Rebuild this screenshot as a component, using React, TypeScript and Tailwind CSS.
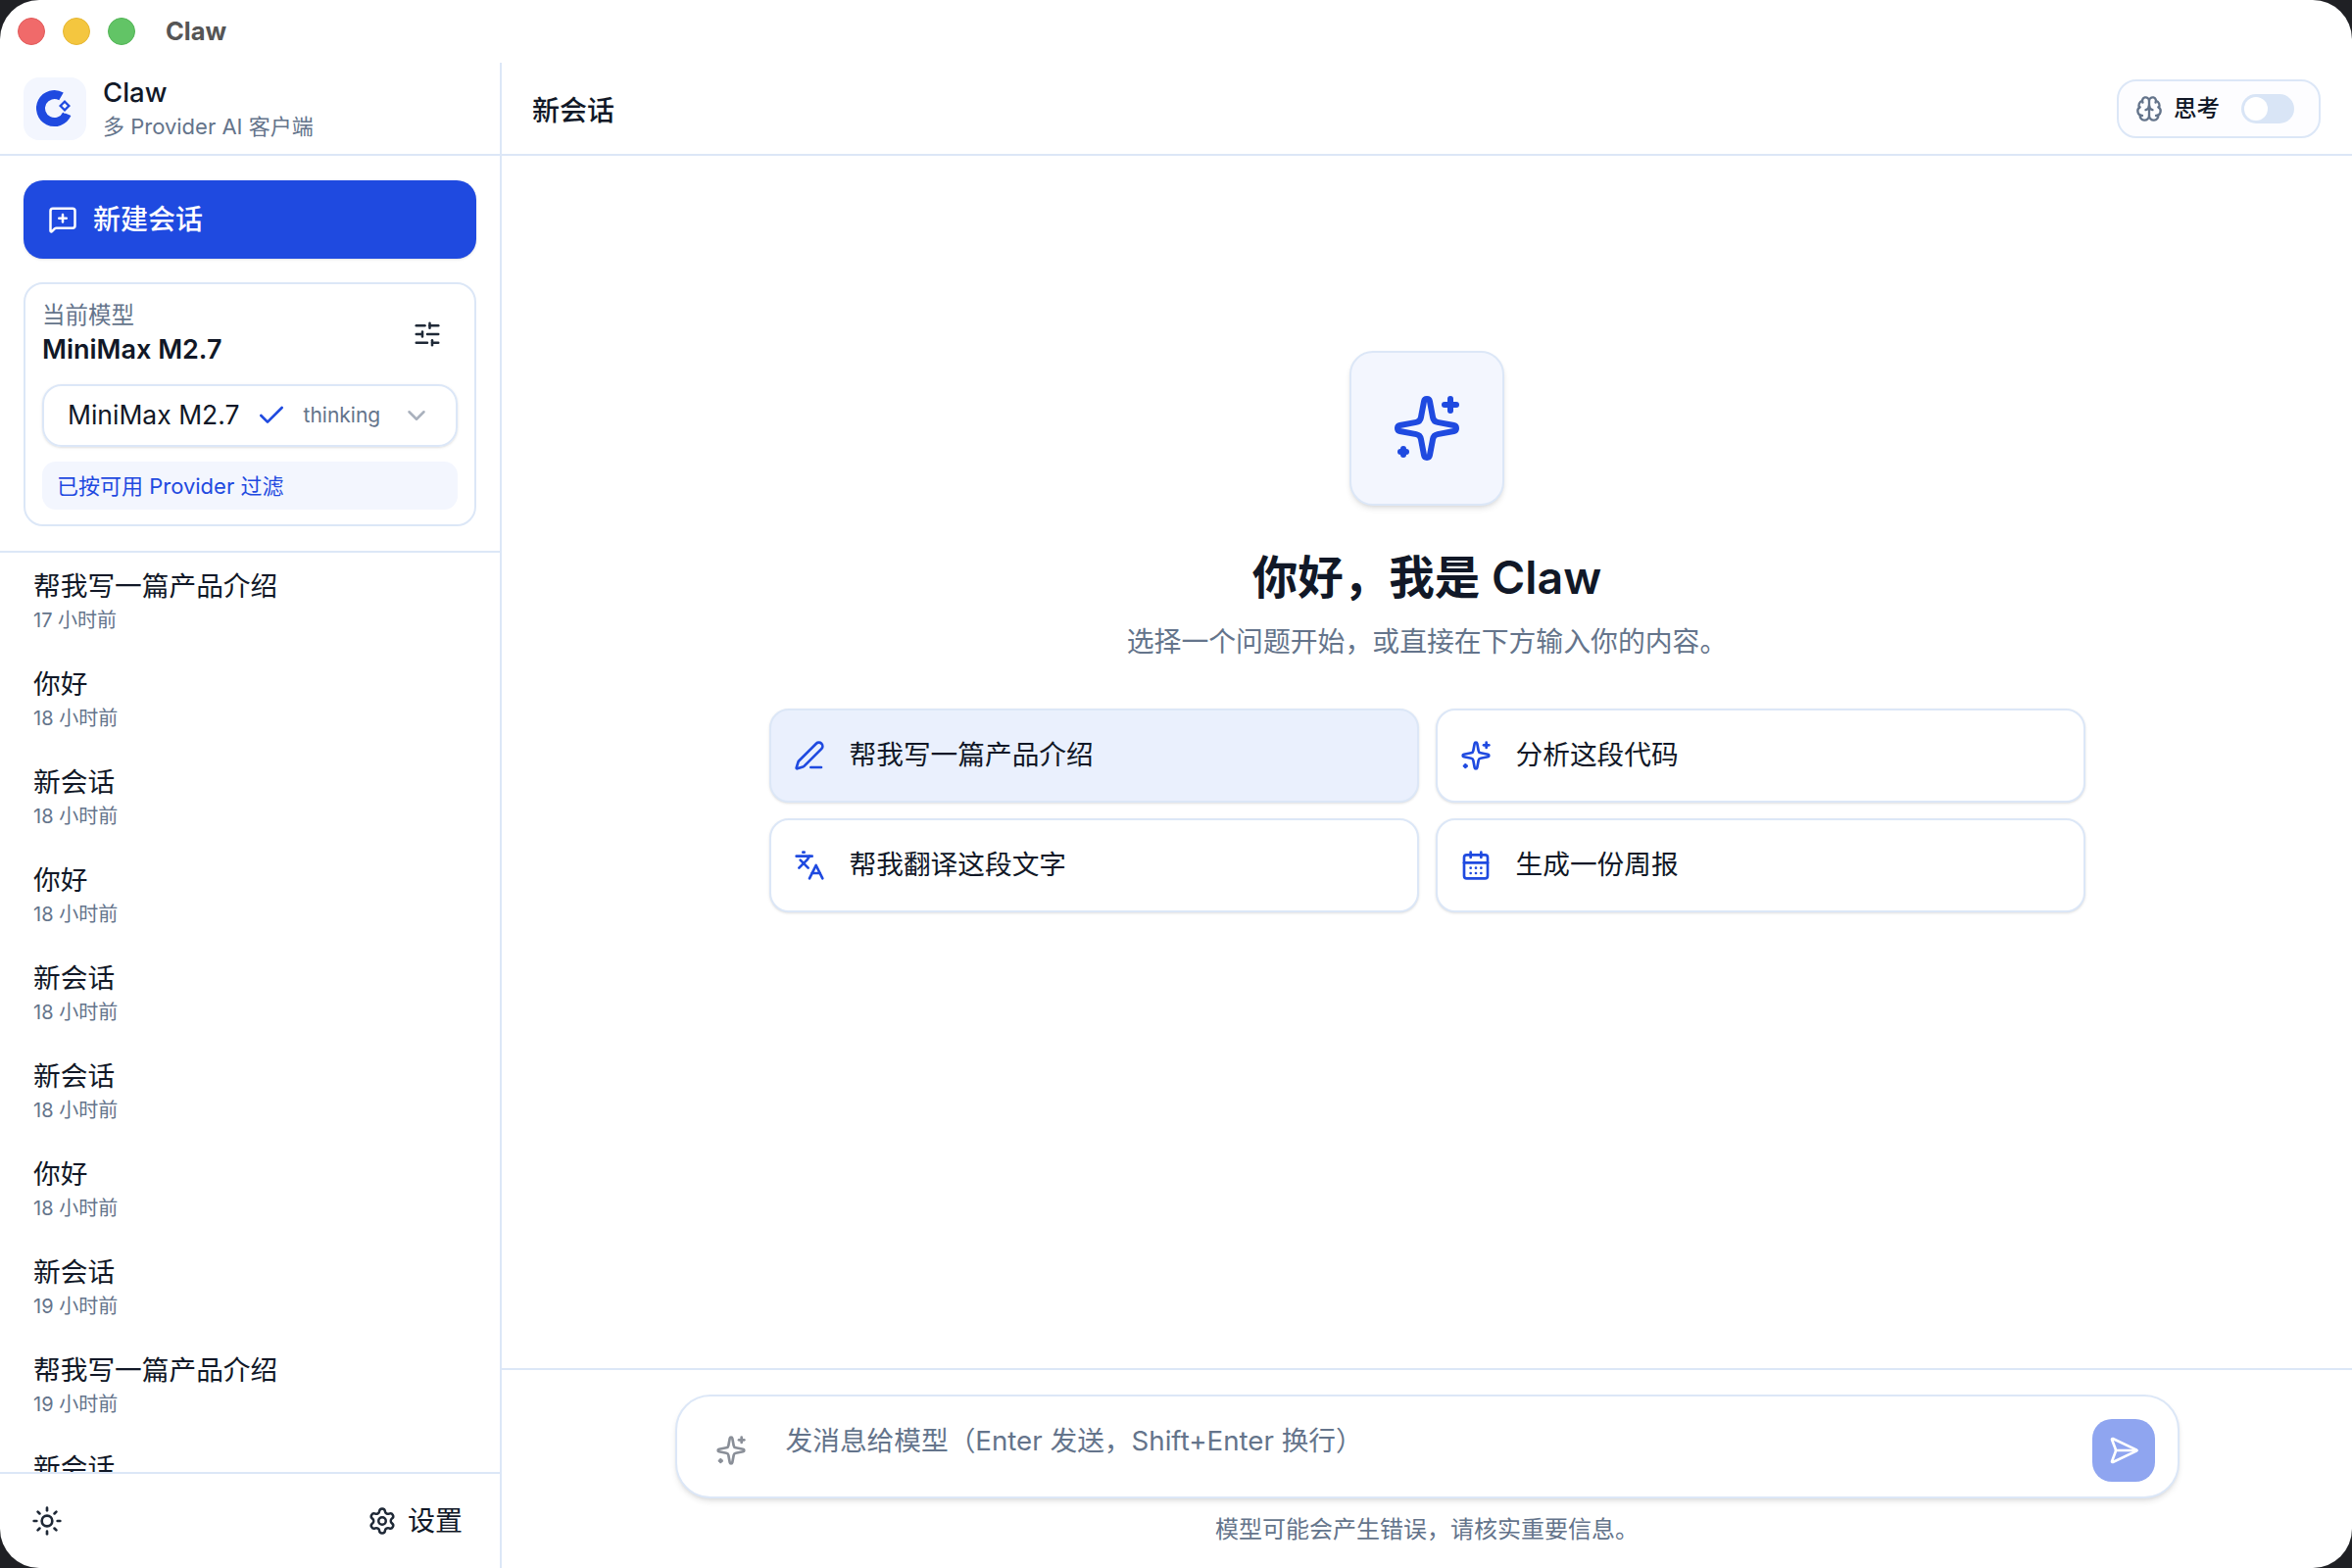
import {
  Brain,
  CalendarDays,
  Check,
  ChevronDown,
  Languages,
  MessageSquarePlus,
  PenLine,
  SendHorizontal,
  Settings,
  SlidersHorizontal,
  Sun,
} from 'lucide-react';

const sessions = [
  { title: '帮我写一篇产品介绍', time: '17 小时前' },
  { title: '你好', time: '18 小时前' },
  { title: '新会话', time: '18 小时前' },
  { title: '你好', time: '18 小时前' },
  { title: '新会话', time: '18 小时前' },
  { title: '新会话', time: '18 小时前' },
  { title: '你好', time: '18 小时前' },
  { title: '新会话', time: '19 小时前' },
  { title: '帮我写一篇产品介绍', time: '19 小时前' },
  { title: '新会话', time: '19 小时前' },
];

function Spark({ className }: { className?: string }) {
  return (
    <svg
      viewBox="0 0 24 24"
      fill="none"
      stroke="currentColor"
      strokeWidth="2"
      strokeLinecap="round"
      strokeLinejoin="round"
      className={className}
    >
      <path d="M11.017 2.814a1 1 0 0 1 1.966 0l1.051 5.558a2 2 0 0 0 1.594 1.594l5.558 1.051a1 1 0 0 1 0 1.966l-5.558 1.051a2 2 0 0 0-1.594 1.594l-1.051 5.558a1 1 0 0 1-1.966 0l-1.051-5.558a2 2 0 0 0-1.594-1.594l-5.558-1.051a1 1 0 0 1 0-1.966l5.558-1.051a2 2 0 0 0 1.594-1.594z" />
      <path d="M20 2v4" />
      <path d="M22 4h-4" />
      <path d="M4 19v2" />
      <path d="M3 20h2" />
    </svg>
  );
}

const prompts = [
  { text: '帮我写一篇产品介绍', Icon: PenLine, active: true },
  { text: '分析这段代码', Icon: Spark, active: false },
  { text: '帮我翻译这段文字', Icon: Languages, active: false },
  { text: '生成一份周报', Icon: CalendarDays, active: false },
];

function Logo() {
  return (
    <svg width="64" height="64" viewBox="0 0 64 64" fill="none">
      <path d="M38.500 19.400A14 14 0 1 0 44.300 37.200" stroke="#1f4ae0" strokeWidth="9" />
      <path d="M42 22l7 7-7 7-7-7z" fill="#1f4ae0" stroke="#f3f6fe" strokeWidth="1.500" />
      <path d="M42 26.200l2.800 2.800-2.800 2.800-2.800-2.800z" fill="#f3f6fe" />
    </svg>
  );
}

export default function App() {
  return (
    <div className="w-[2400px] h-[1600px] bg-[#1f2024] font-['Inter','Noto_Sans_CJK_SC',sans-serif]">
      <div className="w-full h-full bg-white rounded-[40px] overflow-hidden flex flex-col text-[#111827]">
        {/* title bar */}
        <div className="h-[64px] shrink-0 flex items-center pl-[18px]">
          <div className="flex gap-[18px]">
            <span className="w-[28px] h-[28px] rounded-full bg-[#f06a6a] border border-[#e05a5a]" />
            <span className="w-[28px] h-[28px] rounded-full bg-[#f4c63f] border border-[#e5b632]" />
            <span className="w-[28px] h-[28px] rounded-full bg-[#62c466] border border-[#52b456]" />
          </div>
          <span className="ml-[31px] text-[25.500px] font-bold text-[#555555]">Claw</span>
        </div>

        <div className="flex-1 flex min-h-0">
          {/* sidebar */}
          <aside className="w-[512px] shrink-0 border-r-2 border-[#dce7f7] flex flex-col">
            <div className="h-[95px] shrink-0 border-b-2 border-[#dce7f7] flex items-center pl-[24px] gap-[17px]">
              <div className="w-[64px] h-[64px] rounded-[16px] bg-[#f3f6fe] flex items-center justify-center">
                <Logo />
              </div>
              <div>
                <div className="text-[27.500px] leading-[34px] font-medium">Claw</div>
                <div className="mt-[3px] text-[22px] leading-[30px] text-[#64748b]">多 Provider AI 客户端</div>
              </div>
            </div>

            <div className="shrink-0 px-[24px] pt-[25px] pb-[25px] border-b-2 border-[#dce7f7]">
              <button className="w-full h-[80px] rounded-[20px] bg-[#1f4ae0] text-white flex items-center pl-[25px] gap-[16px] text-[28px] font-medium shadow-sm">
                <MessageSquarePlus className="w-[30px] h-[30px]" />
                <span>新建会话</span>
              </button>

              <div className="mt-[24px] h-[249px] rounded-[20px] border-2 border-[#dce7f7] px-[17px] pt-[16px]">
                <div className="flex items-center justify-between pr-[16px]">
                  <div>
                    <div className="text-[23.500px] leading-[32px] text-[#64748b]">当前模型</div>
                    <div className="text-[27px] leading-[38px] font-semibold">MiniMax M2.7</div>
                  </div>
                  <SlidersHorizontal className="w-[30px] h-[30px] text-[#1f2937]" />
                </div>
                <div className="mt-[16px] h-[64px] rounded-[20px] border-2 border-[#dce7f7] shadow-sm flex items-center pl-[24px] pr-[25px]">
                  <span className="text-[26.500px]">MiniMax M2.7</span>
                  <Check className="ml-[16px] w-[32px] h-[32px] text-[#1f4ae0]" />
                  <span className="ml-[17px] text-[21px] text-[#64748b]">thinking</span>
                  <ChevronDown className="ml-auto w-[30px] h-[30px] text-[#a9b1bd]" />
                </div>
                <div className="mt-[15px] h-[49px] rounded-[14px] bg-[#f3f6fe] flex items-center pl-[15px] pt-[2px] text-[22px] text-[#1f4ae0]">
                  已按可用 Provider 过滤
                </div>
              </div>
            </div>

            <div className="flex-1 min-h-0 overflow-hidden px-[34px] pt-[15px]">
              {sessions.map((s, i) => (
                <div key={i} className="h-[100px]">
                  <div className="text-[27.700px] leading-[38px] whitespace-nowrap">{s.title}</div>
                  <div className="mt-[2px] text-[20px] leading-[28px] text-[#64748b]">{s.time}</div>
                </div>
              ))}
            </div>

            <div className="h-[98px] shrink-0 border-t-2 border-[#dce7f7] flex items-center justify-between pl-[32px] pr-[38px]">
              <Sun className="w-[32px] h-[32px] text-[#1f2937]" />
              <div className="flex items-center gap-[11px] text-[28px]">
                <Settings className="w-[30px] h-[30px] text-[#1f2937]" />
                设置
              </div>
            </div>
          </aside>

          {/* main */}
          <main className="flex-1 min-w-0 flex flex-col">
            <div className="h-[95px] shrink-0 border-b-2 border-[#dce7f7] flex items-center justify-between pl-[31px] pr-[32px]">
              <span className="mt-[4px] text-[28px] font-medium">新会话</span>
              <div className="w-[208px] h-[60px] rounded-[20px] border-2 border-[#dce7f7] bg-[#fdfdff] flex items-center pl-[17px] gap-[11px]">
                <Brain className="w-[28px] h-[28px] text-[#64748b]" />
                <span className="text-[23.500px] font-medium">思考</span>
                <span className="ml-[11px] w-[54px] h-[30px] rounded-full bg-[#d9e5f6] flex items-center pl-[3px]">
                  <span className="w-[24px] h-[24px] rounded-full bg-white" />
                </span>
              </div>
            </div>

            <div className="flex-1 min-h-0 flex flex-col items-center pt-[199px]">
              <div className="w-[158px] h-[158px] rounded-[24px] border-2 border-[#dce7f7] bg-[#f3f6fe] shadow-md flex items-center justify-center">
                <Spark className="w-[72px] h-[72px] text-[#1f4ae0]" />
              </div>
              <h1 className="mt-[38px] text-[46.500px] leading-[70px] font-semibold">你好，我是 Claw</h1>
              <p className="mt-[12px] text-[27.850px] leading-[38px] text-[#64748b]">
                选择一个问题开始，或直接在下方输入你的内容。
              </p>
              <div className="mt-[49px] w-[1343px] grid grid-cols-2 gap-x-[17px] gap-y-[16px]">
                {prompts.map(({ text, Icon, active }) => (
                  <div
                    key={text}
                    className={`h-[96px] rounded-[20px] border-2 border-[#dce7f7] shadow-sm flex items-center pl-[23px] gap-[25px] text-[27.700px] ${active ? 'bg-[#eaf0fd]' : 'bg-white'}`}
                  >
                    <Icon className="w-[32px] h-[32px] text-[#1f4ae0]" />
                    {text}
                  </div>
                ))}
              </div>
            </div>

            <div className="h-[204px] shrink-0 border-t-2 border-[#dce7f7] flex flex-col items-center pt-[25px]">
              <div className="w-[1535px] h-[106px] rounded-[36px] border-2 border-[#dce7f7] bg-white shadow-md flex items-center pl-[39px] pr-[23px]">
                <Spark className="mt-[8px] w-[32px] h-[32px] text-[#8a8f98]" />
                <span className="ml-[40px] -mt-[10px] text-[27.700px] text-[#64748b]">
                  发消息给模型（Enter 发送，Shift+Enter 换行）
                </span>
                <button className="ml-auto mt-[8px] w-[64px] h-[64px] rounded-[20px] bg-[#8fa5f0] flex items-center justify-center">
                  <SendHorizontal className="w-[32px] h-[32px] text-white" />
                </button>
              </div>
              <p className="mt-[17px] text-[24px] leading-[30px] text-[#64748b]">
                模型可能会产生错误，请核实重要信息。
              </p>
            </div>
          </main>
        </div>
      </div>
    </div>
  );
}
